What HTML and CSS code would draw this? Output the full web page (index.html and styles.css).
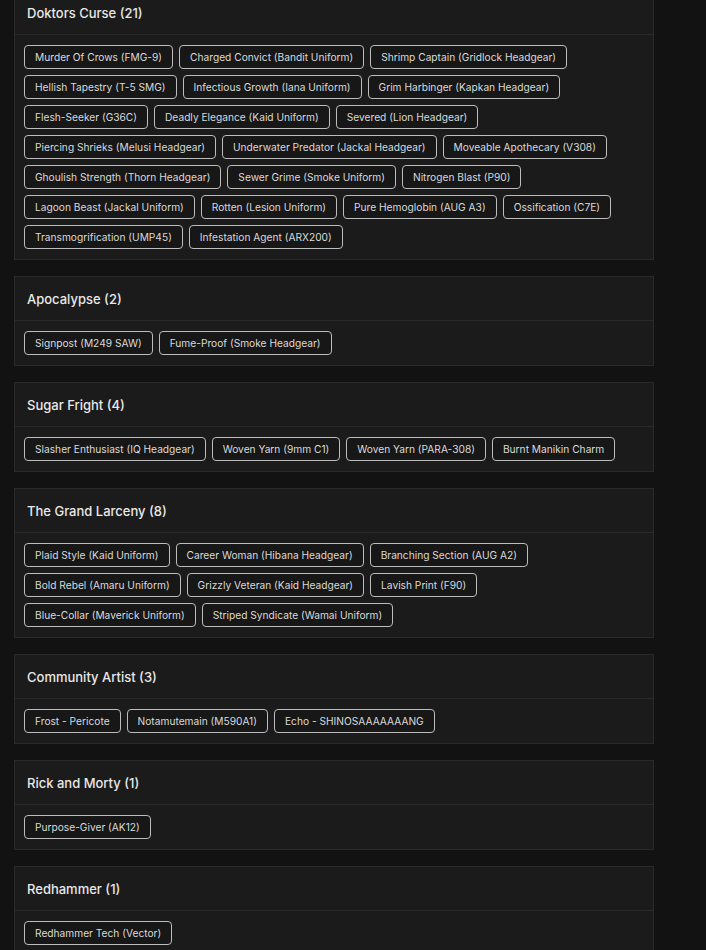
FILE: index.html
```html
<!DOCTYPE html>
<html lang="en">
<head>
    <meta charset="UTF-8">
    <meta name="viewport" content="width=device-width, initial-scale=1.0">
    <title>Event Collections</title>
    <link rel="stylesheet" href="styles.css">
</head>
<body>

    <div class="collections">

        <!-- Doktors Curse -->
        <div class="card">
            <div class="card-header">Doktors Curse (21)</div>
            <div class="card-body">
                <span class="tag">Murder Of Crows (FMG-9)</span>
                <span class="tag">Charged Convict (Bandit Uniform)</span>
                <span class="tag">Shrimp Captain (Gridlock Headgear)</span>
                <span class="tag">Hellish Tapestry (T-5 SMG)</span>
                <span class="tag">Infectious Growth (Iana Uniform)</span>
                <span class="tag">Grim Harbinger (Kapkan Headgear)</span>
                <span class="tag">Flesh-Seeker (G36C)</span>
                <span class="tag">Deadly Elegance (Kaid Uniform)</span>
                <span class="tag">Severed (Lion Headgear)</span>
                <span class="tag">Piercing Shrieks (Melusi Headgear)</span>
                <span class="tag">Underwater Predator (Jackal Headgear)</span>
                <span class="tag">Moveable Apothecary (V308)</span>
                <span class="tag">Ghoulish Strength (Thorn Headgear)</span>
                <span class="tag">Sewer Grime (Smoke Uniform)</span>
                <span class="tag">Nitrogen Blast (P90)</span>
                <span class="tag">Lagoon Beast (Jackal Uniform)</span>
                <span class="tag">Rotten (Lesion Uniform)</span>
                <span class="tag">Pure Hemoglobin (AUG A3)</span>
                <span class="tag">Ossification (C7E)</span>
                <span class="tag">Transmogrification (UMP45)</span>
                <span class="tag">Infestation Agent (ARX200)</span>
            </div>
        </div>

        <!-- Apocalypse -->
        <div class="card">
            <div class="card-header">Apocalypse (2)</div>
            <div class="card-body">
                <span class="tag">Signpost (M249 SAW)</span>
                <span class="tag">Fume-Proof (Smoke Headgear)</span>
            </div>
        </div>

        <!-- Sugar Fright -->
        <div class="card">
            <div class="card-header">Sugar Fright (4)</div>
            <div class="card-body">
                <span class="tag">Slasher Enthusiast (IQ Headgear)</span>
                <span class="tag">Woven Yarn (9mm C1)</span>
                <span class="tag">Woven Yarn (PARA-308)</span>
                <span class="tag">Burnt Manikin Charm</span>
            </div>
        </div>

        <!-- The Grand Larceny -->
        <div class="card">
            <div class="card-header">The Grand Larceny (8)</div>
            <div class="card-body">
                <span class="tag">Plaid Style (Kaid Uniform)</span>
                <span class="tag">Career Woman (Hibana Headgear)</span>
                <span class="tag">Branching Section (AUG A2)</span>
                <span class="tag">Bold Rebel (Amaru Uniform)</span>
                <span class="tag">Grizzly Veteran (Kaid Headgear)</span>
                <span class="tag">Lavish Print (F90)</span>
                <span class="tag">Blue-Collar (Maverick Uniform)</span>
                <span class="tag">Striped Syndicate (Wamai Uniform)</span>
            </div>
        </div>

        <!-- Community Artist -->
        <div class="card">
            <div class="card-header">Community Artist (3)</div>
            <div class="card-body">
                <span class="tag">Frost - Pericote</span>
                <span class="tag">Notamutemain (M590A1)</span>
                <span class="tag">Echo - SHINOSAAAAAAANG</span>
            </div>
        </div>

        <!-- Rick and Morty -->
        <div class="card">
            <div class="card-header">Rick and Morty (1)</div>
            <div class="card-body">
                <span class="tag">Purpose-Giver (AK12)</span>
            </div>
        </div>

        <!-- Redhammer -->
        <div class="card">
            <div class="card-header">Redhammer (1)</div>
            <div class="card-body">
                <span class="tag">Redhammer Tech (Vector)</span>
            </div>
        </div>

    </div>

</body>
</html>
```

FILE: styles.css
```css
* {
    margin: 0;
    padding: 0;
    box-sizing: border-box;
}

body {
    font-family: Inter, "Open Sans", sans-serif;
    background: #121212;
    color: #e4e4e4;
    overflow: hidden;
}

/* List of collections (page is scrolled a little) */
.collections {
    width: 640px;
    margin: -10px 0 0 14px;
    display: flex;
    flex-direction: column;
    gap: 16px;
}

.card {
    background: #1b1b1b;
    border: 1px solid #2a2a2a;
}

.card-header {
    height: 44px;
    padding: 0 12px;
    display: flex;
    align-items: center;
    font-size: 13px;
    font-weight: 500;
    color: #e8e8e8;
    border-bottom: 1px solid #2a2a2a;
}

.card-body {
    display: flex;
    flex-wrap: wrap;
    gap: 6px;
    padding: 10px 9px;
}

.tag {
    height: 24px;
    padding: 0 10px;
    display: flex;
    align-items: center;
    font-size: 10.2px;
    color: #dadada;
    background: #171717;
    border: 1px solid #bdbdbd;
    border-radius: 4px;
    white-space: nowrap;
}
```
